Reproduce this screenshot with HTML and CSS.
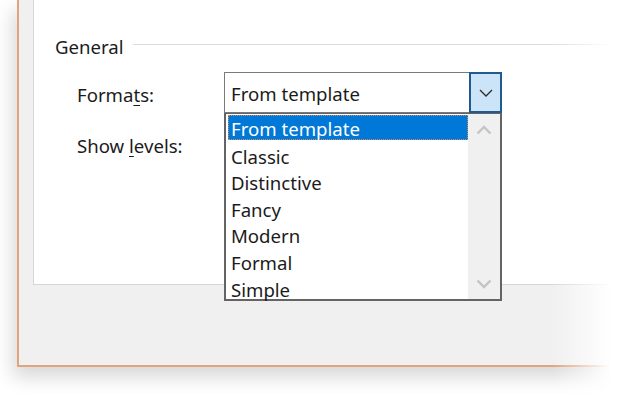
FILE: index.html
```html
<!DOCTYPE html>
<html>
<head>
<meta charset="utf-8">
<link rel="stylesheet" href="styles.css">
</head>
<body>
<div class="stage">
  <div class="window">
    <div class="panel">
      <div class="group-head">
        <span class="group-title">General</span>
        <span class="group-line"></span>
      </div>
      <div class="row row-formats">
        <span class="label">Forma<u>t</u>s:</span>
        <div class="combo-wrap">
          <div class="combo">
            <span class="combo-value">From template</span>
            <span class="combo-btn">
              <svg width="14" height="8" viewBox="0 0 14 8"><path d="M1 1 L7 7 L13 1" fill="none" stroke="#2b2b2b" stroke-width="1.3"/></svg>
            </span>
          </div>
          <div class="dropdown">
            <ul class="items">
              <li class="item selected">From template</li>
              <li class="item">Classic</li>
              <li class="item">Distinctive</li>
              <li class="item">Fancy</li>
              <li class="item">Modern</li>
              <li class="item">Formal</li>
              <li class="item">Simple</li>
            </ul>
            <div class="scrollbar">
              <svg width="16" height="10" viewBox="0 0 16 10"><path d="M1.5 8.5 L8 2 L14.5 8.5" fill="none" stroke="#c4c4c4" stroke-width="2.4"/></svg>
              <svg width="16" height="10" viewBox="0 0 16 10"><path d="M1.5 1.5 L8 8 L14.5 1.5" fill="none" stroke="#c4c4c4" stroke-width="2.4"/></svg>
            </div>
          </div>
        </div>
      </div>
      <div class="row row-levels">
        <span class="label">Show <u>l</u>evels:</span>
      </div>
    </div>
  </div>
  <div class="fade"></div>
</div>
</body>
</html>
```
FILE: styles.css
```css
html, body {
  margin: 0;
  padding: 0;
  background: #ffffff;
}
body {
  width: 622px;
  height: 412px;
  overflow: hidden;
  font-family: "Noto Sans", "Open Sans", sans-serif;
  color: #1b1b1b;
}
.stage {
  position: relative;
  width: 622px;
  height: 412px;
  padding-left: 17px;
  box-sizing: border-box;
  overflow: hidden;
}
.window {
  width: 605px;
  height: 367px;
  box-sizing: border-box;
  background: #f0f0f0;
  border-left: 2px solid #e2a47c;
  border-bottom: 2px solid #e2a47c;
  padding-left: 14px;
  box-shadow: -4px 10px 18px rgba(0, 0, 0, 0.16);
}
.panel {
  height: 285px;
  box-sizing: border-box;
  background: #ffffff;
  border-left: 1px solid #d6d6d6;
  border-bottom: 1px solid #d6d6d6;
  padding: 33px 0 0 21px;
}
.group-head {
  display: flex;
  align-items: center;
  height: 27px;
}
.group-title {
  font-size: 18.6px;
  line-height: 27px;
}
.group-line {
  flex: 1;
  height: 1px;
  background: #dcdcdc;
  margin-left: 9px;
  margin-top: -5px;
}
.row {
  display: flex;
  align-items: center;
  padding-left: 22px;
}
.row-formats {
  margin-top: 12px;
  height: 41px;
}
.row-levels {
  margin-top: 17px;
  height: 27px;
}
.label {
  width: 147px;
  font-size: 18.6px;
  line-height: 27px;
  padding-top: 3px;
}
.label u {
  text-underline-offset: 3px;
}
.combo-wrap {
  position: relative;
}
.combo {
  width: 278px;
  height: 41px;
  box-sizing: border-box;
  border: 1px solid #7a7a7a;
  display: flex;
  align-items: center;
  background: #fff;
}
.combo-value {
  flex: 1;
  font-size: 18.6px;
  padding-left: 6px;
  padding-top: 2px;
}
.combo-btn {
  width: 33px;
  height: 41px;
  margin: -1px -1px -1px 0;
  box-sizing: border-box;
  border: 2px solid #1f5a91;
  background: #cce4f7;
  display: flex;
  align-items: center;
  justify-content: center;
}
.dropdown {
  position: absolute;
  left: 0;
  top: 41px;
  width: 278px;
  height: 188px;
  box-sizing: border-box;
  border: 2px solid #646464;
  border-top: 1px solid #646464;
  background: #fff;
  display: flex;
}
.items {
  list-style: none;
  margin: 0;
  padding: 1px 0 0 2px;
  flex: 1;
}
.item {
  font-size: 18.6px;
  height: 26.6px;
  line-height: 26px;
  padding-left: 3px;
  padding-top: 2px;
  box-sizing: border-box;
}
.item.selected {
  background: #0078d7;
  color: #ffffff;
  outline: 1px dotted #d48a63;
  outline-offset: -1px;
  padding-left: 3px;
  padding-top: 1px;
  height: 25px;
  line-height: 25px;
  margin-bottom: 1.6px;
}
.scrollbar {
  width: 32px;
  background: #f0f0f0;
  display: flex;
  flex-direction: column;
  justify-content: space-between;
  align-items: center;
  padding: 11px 0 10px;
  box-sizing: border-box;
}
.fade {
  position: absolute;
  top: 0;
  right: 0;
  width: 70px;
  height: 412px;
  background: linear-gradient(to right, rgba(255,255,255,0), #ffffff 85%);
}
```
